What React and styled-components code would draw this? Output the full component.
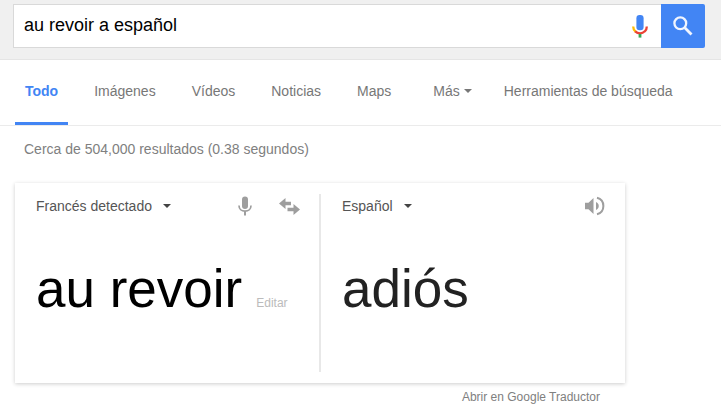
import React, { useState } from "react";
import styled, { createGlobalStyle } from "styled-components";

const GlobalStyle = createGlobalStyle`
  * {
    box-sizing: border-box;
  }
  body {
    margin: 0;
    background: #fff;
    font-family: "Liberation Sans", Arial, sans-serif;
    font-size: 14px;
    color: #808080;
  }
  button, input, select {
    font-family: inherit;
  }
`;

const Header = styled.header`
  background: #f0f0f0;
  border-bottom: 1px solid #e5e5e5;
  padding: 4px 16px 11px 13px;
`;

const SearchForm = styled.form`
  display: flex;
  height: 44px;
`;

const SearchBox = styled.div`
  flex: 1;
  display: flex;
  align-items: center;
  background: #fff;
  border: 1px solid #d9d9d9;
  border-right: none;
`;

const SearchInput = styled.input`
  flex: 1;
  min-width: 0;
  height: 42px;
  padding: 0 10px 2px;
  border: none;
  outline: none;
  background: transparent;
  color: #000;
  font-size: 18px;
`;

const IconButton = styled.button`
  display: flex;
  align-items: center;
  justify-content: center;
  width: ${(props) => props.$size || 24}px;
  height: ${(props) => props.$size || 24}px;
  padding: 0;
  border: none;
  background: transparent;
  color: #9e9e9e;
  cursor: pointer;
`;

const SearchButton = styled(IconButton)`
  background: #4285f4;
  border-radius: 0 2px 2px 0;
  color: #f1f5fe;
`;

const Nav = styled.nav`
  display: flex;
  gap: 16px;
  height: 66px;
  padding-left: 15px;
  border-bottom: 1px solid #ebebeb;
`;

const Tab = styled.a`
  display: flex;
  align-items: center;
  padding: 0 10px;
  border-bottom: 3px solid ${(props) => (props.$active ? "#4285f4" : "transparent")};
  color: ${(props) => (props.$active ? "#4285f4" : "#777")};
  font-weight: ${(props) => (props.$active ? "bold" : "normal")};
  line-height: 16px;
  text-decoration: none;
  white-space: nowrap;
`;

const MoreTab = styled(Tab)`
  gap: 4px;
  margin: 0 -4px 0 6px;
  border-width: 0 0 3px;
  background: transparent;
  font-size: 14px;
  cursor: pointer;
`;

const Arrow = styled.span`
  width: 0;
  height: 0;
  border: 4px solid transparent;
  border-top-color: currentColor;
  border-bottom: none;
`;

const Stats = styled.p`
  margin: 0;
  padding: 15px 24px 26px;
  line-height: 16px;
`;

const Result = styled.main`
  max-width: 640px;
  padding: 0 15px;
`;

const Card = styled.section`
  display: flex;
  padding: 11px 0;
  background: #fff;
  box-shadow: 0 1px 4px rgba(0, 0, 0, 0.2);
`;

const Panel = styled.div`
  flex: 1;
  min-height: 178px;
  padding: 0 18px 0 21px;

  & + & {
    border-left: 2px solid #e8e8e8;
  }
`;

const PanelBar = styled.div`
  display: flex;
  align-items: center;
  justify-content: space-between;
  height: 24px;
`;

const Tools = styled.div`
  display: flex;
  gap: 20px;
`;

const LangPicker = styled.label`
  position: relative;
  display: flex;
  align-items: center;
  color: #444;

  ${Arrow} {
    position: absolute;
    right: 0;
    pointer-events: none;
  }
`;

const LangSelect = styled.select`
  appearance: none;
  field-sizing: content;
  padding: 0 19px 0 0;
  border: none;
  outline: none;
  background: transparent;
  color: #555;
  font-size: 14px;
  line-height: 16px;
`;

const Words = styled.div`
  display: flex;
  align-items: baseline;
  gap: 14px;
  margin-top: 41px;
  color: ${(props) => props.$color};
  font-size: 53px;
  line-height: 60px;
  white-space: nowrap;
`;

const EditButton = styled.button`
  padding: 0;
  border: none;
  background: transparent;
  color: #bbb;
  font-size: 12px;
  cursor: pointer;
`;

const Footer = styled.footer`
  padding: 7px 25px 0 0;
  text-align: right;
  font-size: 12px;
  line-height: 14px;

  a {
    color: #808080;
    text-decoration: none;
  }
`;

function ColorMic() {
  return (
    <svg width="16" height="23" viewBox="0 0 16 23" fill="none" aria-hidden="true">
      <rect x="4.4" y="0" width="7.2" height="15.2" rx="3.2" fill="#4285f4" />
      <path d="M1.2 11.4C1.2 13.6 1.9 15.2 3.6 16.7" stroke="#fbbc05" strokeWidth="2.3" />
      <path d="M3.2 16.3C6 19 10.2 19 12.8 16.3C14.2 15 14.8 13.5 14.8 11.4" stroke="#ea4335" strokeWidth="2.3" />
      <path d="M8 19V22.6" stroke="#34a853" strokeWidth="2.8" />
    </svg>
  );
}

function SearchIcon() {
  return (
    <svg width="20" height="20" viewBox="0 0 20 20" fill="none" stroke="currentColor" aria-hidden="true">
      <circle cx="7.3" cy="7.3" r="5.9" strokeWidth="2.3" />
      <path d="M11.8 11.8L18.5 18.5" strokeWidth="2.8" />
    </svg>
  );
}

function MicIcon() {
  return (
    <svg width="14" height="20" viewBox="0 0 14 20" fill="none" aria-hidden="true">
      <rect x="4" y="0.5" width="6" height="12.5" rx="3" fill="currentColor" />
      <path d="M1 9.5C1 13 3.5 15.2 7 15.2C10.5 15.2 13 13 13 9.5" stroke="currentColor" strokeWidth="1.7" />
      <path d="M7 15V19.5" stroke="currentColor" strokeWidth="2" />
    </svg>
  );
}

function SwapIcon() {
  return (
    <svg width="21" height="17" viewBox="0 0 21 17" fill="currentColor" aria-hidden="true">
      <path d="M0 5.5L6.5 0V3.7H12V7.3H6.5V11Z" />
      <path d="M21 11.5L14.5 6V9.7H8.5V13.3H14.5V17Z" />
    </svg>
  );
}

function SpeakerIcon() {
  return (
    <svg width="20" height="20" viewBox="0 0 20 20" fill="none" aria-hidden="true">
      <path d="M0 6.7H3.5L8.5 2V18L3.5 13.3H0Z" fill="currentColor" />
      <path d="M11 6C14.7 7.5 14.7 12.5 11 14Z" fill="currentColor" />
      <path d="M12 1.8C20.5 4 20.5 16 12 18.2" stroke="currentColor" strokeWidth="2" />
    </svg>
  );
}

const tabs = ["Todo", "Imágenes", "Vídeos", "Noticias", "Maps"];

export default function App() {
  const [query, setQuery] = useState("au revoir a español");
  const [active, setActive] = useState("Todo");

  return (
    <>
      <GlobalStyle />
      <Header>
        <SearchForm role="search" onSubmit={(e) => e.preventDefault()}>
          <SearchBox>
            <SearchInput
              type="text"
              aria-label="Buscar"
              value={query}
              onChange={(e) => setQuery(e.target.value)}
            />
            <IconButton type="button" $size={42} aria-label="Búsqueda por voz">
              <ColorMic />
            </IconButton>
          </SearchBox>
          <SearchButton type="submit" $size={44} aria-label="Buscar">
            <SearchIcon />
          </SearchButton>
        </SearchForm>
      </Header>
      <Nav>
        {tabs.map((tab) => (
          <Tab key={tab} href="#" $active={tab === active} onClick={() => setActive(tab)}>
            {tab}
          </Tab>
        ))}
        <MoreTab as="button" type="button">
          Más <Arrow />
        </MoreTab>
        <Tab href="#">Herramientas de búsqueda</Tab>
      </Nav>
      <Stats>Cerca de 504,000 resultados (0.38 segundos)</Stats>
      <Result>
        <Card>
          <Panel>
            <PanelBar>
              <LangPicker>
                <LangSelect aria-label="Idioma de origen">
                  <option>Francés detectado</option>
                </LangSelect>
                <Arrow />
              </LangPicker>
              <Tools>
                <IconButton type="button" aria-label="Hablar">
                  <MicIcon />
                </IconButton>
                <IconButton type="button" aria-label="Intercambiar idiomas">
                  <SwapIcon />
                </IconButton>
              </Tools>
            </PanelBar>
            <Words $color="#000">
              au revoir
              <EditButton type="button">Editar</EditButton>
            </Words>
          </Panel>
          <Panel>
            <PanelBar>
              <LangPicker>
                <LangSelect aria-label="Idioma de destino">
                  <option>Español</option>
                </LangSelect>
                <Arrow />
              </LangPicker>
              <IconButton type="button" aria-label="Escuchar">
                <SpeakerIcon />
              </IconButton>
            </PanelBar>
            <Words $color="#222">adiós</Words>
          </Panel>
        </Card>
        <Footer>
          <a href="#">Abrir en Google Traductor</a>
        </Footer>
      </Result>
    </>
  );
}
